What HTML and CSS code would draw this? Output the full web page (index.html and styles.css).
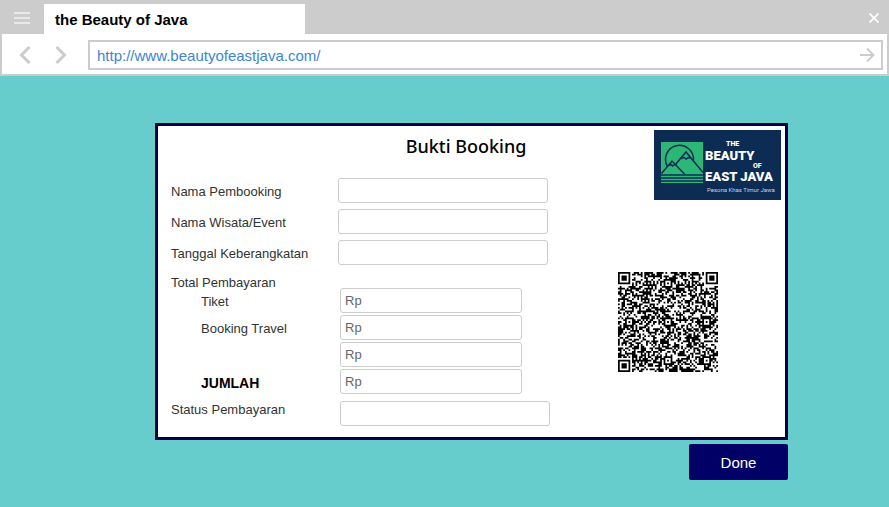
FILE: index.html
```html
<!DOCTYPE html>
<html lang="id">
<head>
<meta charset="utf-8">
<title>the Beauty of Java</title>
<link rel="stylesheet" href="styles.css">
</head>
<body>
<header class="browser">
  <div class="tabs">
    <button class="icon-button menu" type="button" aria-label="Menu">
      <svg width="16" height="12" viewBox="0 0 16 12"><path d="M0 1h16M0 6h16M0 11h16" stroke="#e9e9e9" stroke-width="2"/></svg>
    </button>
    <div class="tab">the Beauty of Java</div>
    <button class="icon-button close" type="button" aria-label="Close">
      <svg width="10" height="10" viewBox="0 0 10 10"><path d="M.5.5l9 9M9.500.5l-9 9" stroke="#fff" stroke-width="1.700"/></svg>
    </button>
  </div>
  <div class="toolbar">
    <button class="icon-button" type="button" aria-label="Back">
      <svg width="12" height="18" viewBox="0 0 12 18"><path d="M10.500 1L2.500 9l8 8" fill="none" stroke="#ccc" stroke-width="3"/></svg>
    </button>
    <button class="icon-button" type="button" aria-label="Forward">
      <svg width="12" height="18" viewBox="0 0 12 18"><path d="M1.500 1l8 8-8 8" fill="none" stroke="#ccc" stroke-width="3"/></svg>
    </button>
    <div class="address">
      <input class="url" type="text" value="http://www.beautyofeastjava.com/" aria-label="Address">
      <button class="icon-button" type="button" aria-label="Go">
        <svg width="15" height="14" viewBox="0 0 15 14"><path d="M0 7h13.500M7 .5L13.500 7 7 13.500" fill="none" stroke="#ccc" stroke-width="2"/></svg>
      </button>
    </div>
  </div>
</header>

<main class="page">
  <form>
    <section class="card">
      <h1 class="title">Bukti Booking</h1>
      <div class="fields">
        <div class="group details">
          <div class="row"><label for="name">Nama Pembooking</label><input id="name" type="text"></div>
          <div class="row"><label for="event">Nama Wisata/Event</label><input id="event" type="text"></div>
          <div class="row"><label for="date">Tanggal Keberangkatan</label><input id="date" type="text"></div>
        </div>
        <div class="group-label">Total Pembayaran</div>
        <div class="group payment">
          <div class="row"><label for="ticket">Tiket</label><input id="ticket" type="text" placeholder="Rp"></div>
          <div class="row"><label for="travel">Booking Travel</label><input id="travel" type="text" placeholder="Rp"></div>
          <div class="row"><label for="other"></label><input id="other" type="text" placeholder="Rp"></div>
          <div class="row total"><label for="total">JUMLAH</label><input id="total" type="text" placeholder="Rp"></div>
        </div>
        <div class="row status"><label for="status">Status Pembayaran</label><input id="status" type="text"></div>
      </div>
      <div class="side">
        <svg class="logo" viewBox="0 0 127 70">
          <rect width="127" height="70" fill="#0d2c54"/>
          <rect x="7" y="12" width="42" height="41" fill="#2db777"/>
          <g fill="none" stroke="#0d2c54" stroke-width="1.500">
            <path d="M13.500 36.500A14 14 0 1 1 39.500 30"/>
            <path d="M21.500 34.500L32 22l17 20.500"/>
            <path d="M27 28.500l3-1 2 1.500 2.500-1.500 2.500.5"/>
            <path d="M7.500 43.500L18 31l12.500 13"/>
            <path d="M14.500 35.500l2.500-1 1.500 1.500 2-1.500 2 .5"/>
            <path d="M7 45h42M7 48h42M7 51h42"/>
          </g>
          <g class="logo-name" fill="#fff">
            <text class="logo-small" x="72" y="16">THE</text>
            <text x="51" y="30">BEAUTY</text>
            <text class="logo-small" x="99" y="38">OF</text>
            <text x="51" y="51">EAST JAVA</text>
          </g>
          <text class="logo-tagline" x="53" y="62" fill="#c9d3e2">Pesona Khas Timur Jawa</text>
        </svg>
        <svg class="qr" viewBox="0 0 57 57" role="img" aria-label="QR"><path id="modules"/></svg>
      </div>
    </section>
    <div class="actions"><button class="done" type="button">Done</button></div>
  </form>
</main>
<script src="qr.js"></script>
</body>
</html>
```
FILE: styles.css
```css
* {
  box-sizing: border-box;
}

body {
  margin: 0;
  min-height: 100vh;
  background: #66cccc;
  font-family: "Liberation Sans", Arial, sans-serif;
  font-size: 13px;
  color: #333;
}

svg {
  display: block;
}

.icon-button {
  display: flex;
  padding: 0;
  border: 0;
  background: none;
}

.browser {
  border: 2px solid #ccc;
  border-top: 0;
  background: #fff;
}

.tabs {
  display: flex;
  align-items: center;
  height: 34px;
  padding: 2px 8px 0 12px;
  background: #ccc;
}

.tab {
  align-self: flex-end;
  width: 261px;
  height: 30px;
  margin-left: 14px;
  padding-left: 11px;
  background: #fff;
  color: #000;
  font-size: 15px;
  font-weight: bold;
  line-height: 31px;
}

.close {
  margin-left: auto;
}

.toolbar {
  display: flex;
  align-items: center;
  gap: 24px;
  padding: 6px 4px 4px 17px;
}

.address {
  display: flex;
  flex: 1;
  align-items: center;
  height: 30px;
  margin-left: -3px;
  padding: 0 6px 0 7px;
  border: 2px solid #ccc;
}

.url {
  flex: 1;
  min-width: 0;
  padding: 0;
  border: 0;
  outline: 0;
  background: none;
  color: #3d85d1;
  font: 15px "Liberation Sans", Arial, sans-serif;
}

.page {
  padding: 47px 101px 27px 155px;
}

.card {
  display: grid;
  grid-template-columns: 1fr 163px;
  grid-template-rows: 52px auto;
  padding: 0 4px 11px 0;
  border: 3px solid #000044;
  background: #fff;
}

.title {
  margin: 0;
  padding: 8px 0 0 156px;
  color: #000;
  font: 500 18px/24px "Noto Sans", sans-serif;
  text-align: center;
}

.fields {
  grid-column: 1;
  padding-left: 13px;
}

.group {
  display: grid;
}

.details {
  gap: 6px;
}

.payment {
  gap: 2px;
}

.row {
  display: flex;
  align-items: center;
}

.row label {
  width: 167px;
  padding-top: 2px;
}

.row input {
  width: 210px;
  height: 25px;
  padding: 0 4px;
  border: 1px solid #ccc;
  border-radius: 3px;
  background: #fff;
  color: #333;
  font: 13px "Liberation Sans", Arial, sans-serif;
}

.row input::placeholder {
  color: #666;
  opacity: 1;
}

.group-label {
  height: 23px;
  padding-top: 8px;
  line-height: 20px;
}

.payment label {
  width: 169px;
  padding-left: 30px;
}

.payment input {
  width: 182px;
}

.total label {
  color: #000;
  font-size: 14px;
  font-weight: bold;
}

.status {
  align-items: flex-start;
  margin-top: 7px;
}

.status label {
  width: 169px;
  padding-top: 1px;
}

.side {
  grid-area: 1 / 2 / 3 / 3;
  padding-top: 4px;
}

.logo {
  width: 127px;
  height: 70px;
  margin: 0 0 72px auto;
}

.logo-name {
  font: 900 13px Roboto, sans-serif;
}

.logo-small {
  font-size: 7px;
}

.logo-tagline {
  font: 6px Roboto, sans-serif;
}

.qr {
  width: 100px;
  height: 100px;
}

.actions {
  display: flex;
  justify-content: flex-end;
  padding-top: 4px;
}

.done {
  width: 99px;
  height: 36px;
  padding: 0;
  border: 0;
  border-radius: 2px;
  background: #000066;
  color: #fff;
  font: 15px "Liberation Sans", Arial, sans-serif;
}
```
FILE: qr.js
```js
// Draws a 57 x 57 module code: finder, alignment and timing patterns over a seeded fill.
const SIZE = 57;
const finders = [[3, 3], [53, 3], [3, 53]];
const alignments = [[28, 6], [6, 28], [28, 28], [50, 28], [28, 50], [50, 50]];
let seed = 20117;

function random() {
  seed = (seed * 48271) % 2147483647;
  return seed / 2147483647;
}

function isDark(x, y) {
  const noise = random() < 0.52;
  for (const [cx, cy] of finders) {
    const d = Math.max(Math.abs(x - cx), Math.abs(y - cy));
    if (d <= 4) return d !== 2 && d !== 4;
  }
  for (const [cx, cy] of alignments) {
    const d = Math.max(Math.abs(x - cx), Math.abs(y - cy));
    if (d <= 2) return d !== 1;
  }
  if (x === 6 || y === 6) return (x + y) % 2 === 0;
  return noise;
}

let path = "";
for (let y = 0; y < SIZE; y++) {
  for (let x = 0; x < SIZE; x++) {
    if (isDark(x, y)) path += `M${x} ${y}h1v1h-1z`;
  }
}
document.getElementById("modules").setAttribute("d", path);
```
